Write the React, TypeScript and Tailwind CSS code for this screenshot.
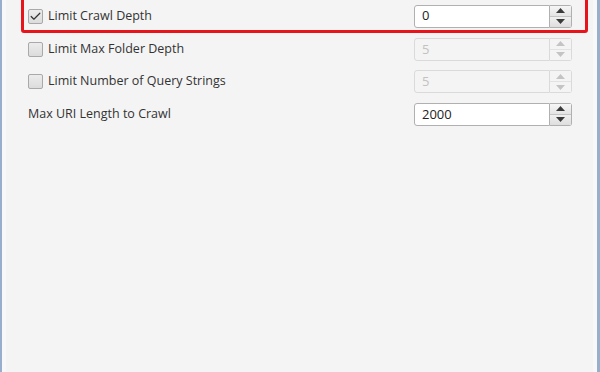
import { Check } from 'lucide-react';

type Row = {
  label: string;
  checkbox: boolean;
  checked?: boolean;
  value: string;
  disabled?: boolean;
};

const ROWS: Row[] = [
  { label: 'Limit Crawl Depth', checkbox: true, checked: true, value: '0' },
  { label: 'Limit Max Folder Depth', checkbox: true, value: '5', disabled: true },
  { label: 'Limit Number of Query Strings', checkbox: true, value: '5', disabled: true },
  { label: 'Max URI Length to Crawl', checkbox: false, value: '2000' },
];

function Arrow({ up, disabled }: { up: boolean; disabled?: boolean }) {
  return (
    <svg width="9" height="5" viewBox="0 0 9 5" className={up ? '' : 'rotate-180'}>
      <path d="M0 5 L4.5 0 L9 5 Z" fill={disabled ? '#c4c4c4' : '#3a3a3a'} />
    </svg>
  );
}

function Spinner({ value, disabled }: { value: string; disabled?: boolean }) {
  return (
    <div className="flex h-[23px] w-[158px]">
      <div
        className={
          'flex flex-1 items-center rounded-l-[3px] border pl-[7px] text-[13px] ' +
          (disabled
            ? 'border-[#dadada] bg-[#f4f4f4] text-[#c2c2c2]'
            : 'border-[#b0b0b0] bg-white text-[#222]')
        }
      >
        {value}
      </div>
      <div
        className={
          'flex w-[22px] flex-col rounded-r-[3px] border border-l-0 ' +
          (disabled ? 'border-[#dadada]' : 'border-[#b0b0b0]')
        }
      >
        <div
          className={
            'flex flex-1 items-center justify-center border-b ' +
            (disabled
              ? 'border-[#e2e2e2] bg-[#f4f4f4]'
              : 'border-[#c4c4c4] bg-gradient-to-b from-[#f6f6f6] to-[#e4e4e4]')
          }
        >
          <Arrow up disabled={disabled} />
        </div>
        <div
          className={
            'flex flex-1 items-center justify-center ' +
            (disabled ? 'bg-[#f4f4f4]' : 'bg-gradient-to-b from-[#f0f0f0] to-[#dedede]')
          }
        >
          <Arrow up={false} disabled={disabled} />
        </div>
      </div>
    </div>
  );
}

function SettingRow({ row, tight }: { row: Row; tight?: boolean }) {
  return (
    <div className={'flex items-center ' + (tight ? 'h-[28px]' : 'h-[32.5px]')}>
      {row.checkbox && (
        <div className="mr-[5px] flex h-[15px] w-[15px] items-center justify-center rounded-[2px] border border-[#a9a9a9] bg-gradient-to-b from-[#ececec] to-[#dcdcdc]">
          {row.checked && <Check size={13} strokeWidth={2.2} color="#333" />}
        </div>
      )}
      <span className="flex-1 text-[12.5px] text-[#333]">{row.label}</span>
      <Spinner value={row.value} disabled={row.disabled} />
    </div>
  );
}

export default function App() {
  return (
    <div
      className="flex h-[372px] w-[600px] overflow-hidden bg-[#f4f4f4]"
      style={{ fontFamily: '"Open Sans", "Noto Sans", sans-serif' }}
    >
      {/* ramka okna lewa */}
      <div className="w-[2px] bg-[#97afca]" />
      <div className="w-[4px] bg-[#f8f8fb]" />

      <div className="flex flex-1 flex-col pl-[15px] pr-[5px]">
        {/* Zaznaczony wiersz */}
        <div className="-mt-[4px] rounded-[3px] border-[3px] border-[#e8141c] pl-[4px] pr-[13px] pt-[3px]">
          <SettingRow row={ROWS[0]} tight />
        </div>
        <div className="pl-[7px] pr-[16px]">
          {ROWS.slice(1).map((row) => (
            <SettingRow key={row.label} row={row} />
          ))}
        </div>
      </div>

      {/* ramka okna prawa */}
      <div className="w-[4px] bg-[#f8f8fb]" />
      <div className="w-[3px] bg-[#97afca]" />
    </div>
  );
}
